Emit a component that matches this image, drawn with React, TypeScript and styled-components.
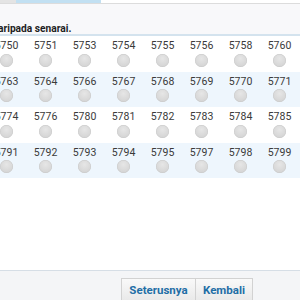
import React from 'react';
import styled, { createGlobalStyle } from 'styled-components';

const GlobalStyle = createGlobalStyle`
  html, body {
    margin: 0;
    padding: 0;
    background: #ffffff;
    overflow: hidden;
  }
  body {
    font-family: Roboto, 'Liberation Sans', Arial, sans-serif;
  }
`;

const Page = styled.div`
  display: flex;
  flex-direction: column;
  width: 300px;
  height: 300px;
  overflow: hidden;
`;

const TabStrip = styled.div`
  display: flex;
  height: 3px;
  flex-shrink: 0;
`;

const TabPiece = styled.div<{ active?: boolean; width: number }>`
  width: ${(p) => p.width}px;
  background: ${(p) => (p.active ? '#c2e0f2' : '#e4e4e4')};
`;

const Header = styled.div`
  display: flex;
  align-items: flex-end;
  height: 33px;
  flex-shrink: 0;
  box-sizing: border-box;
  border-top: 1px solid #dcdcdc;
  border-bottom: 2px solid #d4e3ee;
  background: #f8f8fa;
`;

const Title = styled.div`
  font-size: 10.2px;
  font-weight: 700;
  line-height: 11px;
  color: #1e1e1e;
  text-indent: -2px;
  white-space: nowrap;
`;

const Grid = styled.div`
  margin-left: -13px;
  flex-shrink: 0;
`;

const Row = styled.div<{ shaded?: boolean }>`
  display: grid;
  grid-template-columns: repeat(8, 39px);
  height: 35.6px;
  background: ${(p) => (p.shaded ? '#eef6fd' : '#ffffff')};
`;

const Cell = styled.div`
  display: flex;
  flex-direction: column;
  align-items: center;
  padding-top: 4px;
`;

const Label = styled.span`
  font-size: 10.5px;
  line-height: 12px;
  color: #3a3a3a;
`;

const Radio = styled.span`
  width: 13px;
  height: 13px;
  margin-top: 1.5px;
  border-radius: 50%;
  background: radial-gradient(circle at 50% 35%, #e6e6e6 0%, #d8d8d8 60%, #cdcdcd 100%);
  box-shadow: inset 0 0 0 0.5px #c8c8c8;
`;

const Spacer = styled.div`
  flex: 1;
`;

const Footer = styled.div`
  display: flex;
  justify-content: flex-end;
  align-items: flex-start;
  height: 30px;
  flex-shrink: 0;
  padding: 7px 47px 0 0;
  box-sizing: border-box;
  border-top: 1px solid #d6dee6;
  background: #f4f5f7;
`;

const Button = styled.button<{ width: number }>`
  width: ${(p) => p.width}px;
  height: 26px;
  padding: 0 0 2px;
  border: 1px solid #d2d2d2;
  background: linear-gradient(#f9f9f9, #e7e7e7);
  font-family: Roboto, 'Liberation Sans', Arial, sans-serif;
  font-size: 11.5px;
  font-weight: 700;
  color: #1f6ea6;
  & + & {
    margin-left: -1px;
  }
`;

const rows = [
  ['5750', '5751', '5753', '5754', '5755', '5756', '5758', '5760'],
  ['5763', '5764', '5766', '5767', '5768', '5769', '5770', '5771'],
  ['5774', '5776', '5780', '5781', '5782', '5783', '5784', '5785'],
  ['5791', '5792', '5793', '5794', '5795', '5797', '5798', '5799'],
];

export default function App() {
  return (
    <Page>
      <GlobalStyle />
      <TabStrip>
        <TabPiece width={16} />
        <TabPiece width={85} active />
      </TabStrip>
      <Header>
        <Title>aripada senarai.</Title>
      </Header>
      <Grid>
        {rows.map((row, i) => (
          <Row key={i} shaded={i % 2 === 1}>
            {row.map((n) => (
              <Cell key={n}>
                <Label>{n}</Label>
                <Radio />
              </Cell>
            ))}
          </Row>
        ))}
      </Grid>
      <Spacer />
      <Footer>
        <Button width={75}>Seterusnya</Button>
        <Button width={58}>Kembali</Button>
      </Footer>
    </Page>
  );
}
